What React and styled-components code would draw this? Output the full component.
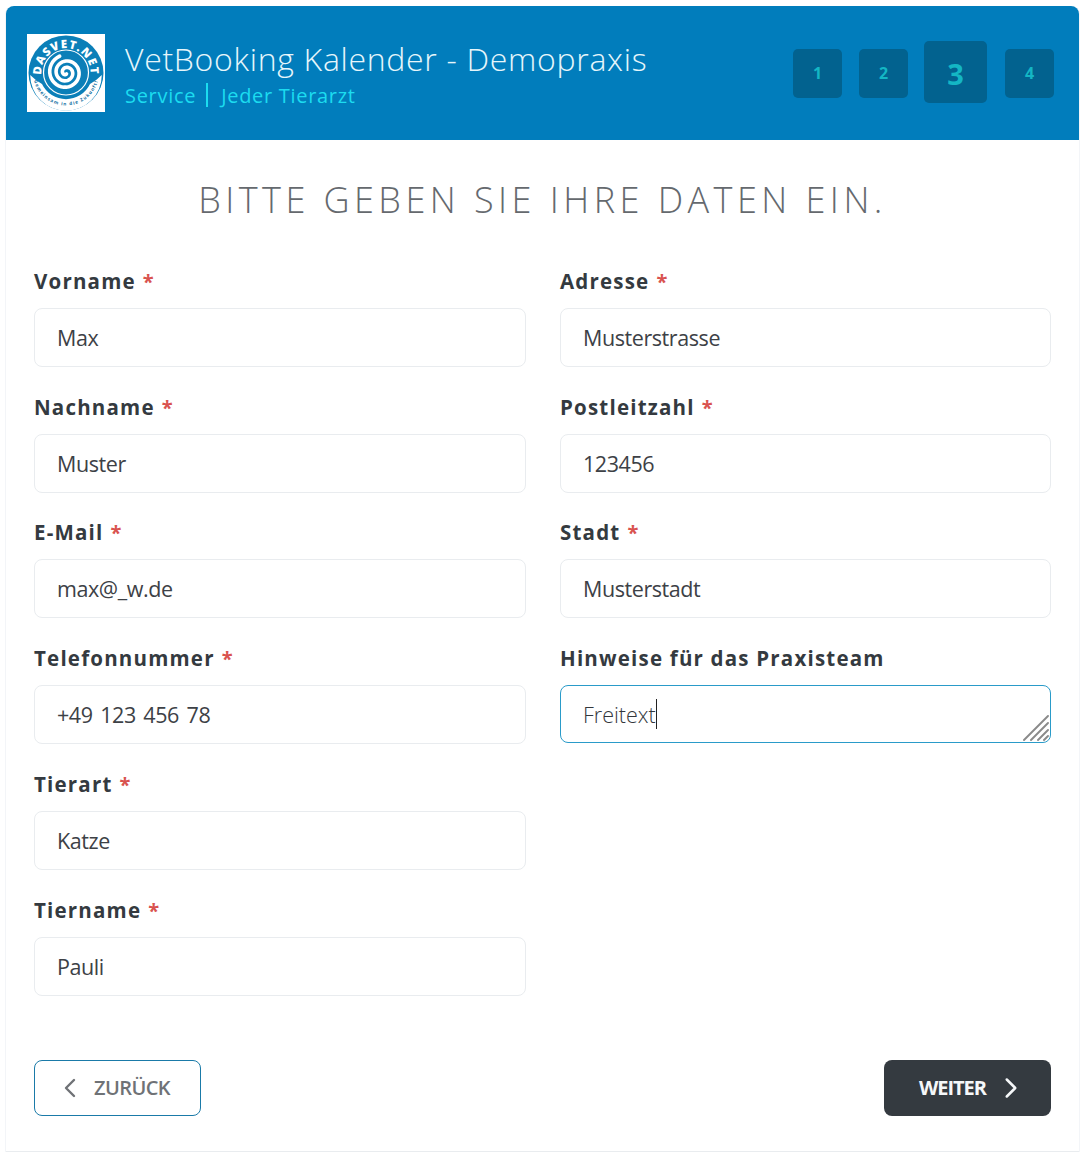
import React from "react";
import styled, { createGlobalStyle } from "styled-components";
import { ChevronLeft, ChevronRight } from "lucide-react";

const Global = createGlobalStyle`
  html, body { margin: 0; padding: 0; background: #fff; }
  * { box-sizing: border-box; }
  body { font-family: "Open Sans", "Liberation Sans", sans-serif; color: #343a40; }
`;

const Page = styled.div`
  width: 1083px;
  height: 1176px;
  padding: 6px 4px 0 6px;
`;
const Card = styled.main`
  width: 1073px;
  height: 1146px;
  border-bottom: 1px solid #e9ecef;
  box-shadow: -1px 0 0 #f3f5f8, 1px 0 0 #f3f5f8;
  border-radius: 8px 8px 0 0;
`;
const Header = styled.header`
  height: 134px;
  background: #017dbc;
  border-radius: 8px 8px 0 0;
  display: flex;
  align-items: flex-start;
  padding: 28px 25px 0 21px;
`;
const LogoBox = styled.div`
  width: 78px;
  height: 78px;
  background: #fff;
  flex: none;
  display: flex;
`;
const Titles = styled.div`
  margin-left: 20px;
  flex: 1;
`;
const Title = styled.h1`
  margin: 1px 0 0;
  font-size: 32px;
  line-height: 48px;
  font-weight: 300;
  letter-spacing: 0.7px;
  color: #e6f6fb;
  white-space: nowrap;
`;
const Subtitle = styled.div`
  margin-top: 0;
  font-size: 20px;
  line-height: 26px;
  font-weight: 400;
  letter-spacing: 0.7px;
  color: #1cdcf0;
  white-space: nowrap;
`;
const Divider = styled.span`
  display: inline-block;
  width: 2px;
  height: 24px;
  background: #1cdcf0;
  margin: 0 13px 0 10px;
  vertical-align: -4px;
`;
const Steps = styled.nav`
  display: flex;
  align-items: center;
  height: 62px;
  margin-top: 7px;
`;
const Step = styled.div`
  width: ${p => (p.$active ? 63 : 49)}px;
  height: ${p => (p.$active ? 62 : 49)}px;
  margin-left: ${p => p.$gap}px;
  margin-top: ${p => (p.$active ? 0 : 2)}px;
  padding-top: ${p => (p.$active ? 3 : 0)}px;
  border-radius: 5px;
  background: #02628f;
  color: #14b6c4;
  font-size: ${p => (p.$active ? 29 : 16)}px;
  font-weight: 700;
  display: flex;
  align-items: center;
  justify-content: center;
`;
const Body = styled.div`
  padding: 0 28px;
`;
const Heading = styled.h2`
  margin: 0;
  padding-top: 35px;
  height: 124.9px;
  text-align: center;
  font-size: 36px;
  line-height: 50px;
  font-weight: 300;
  letter-spacing: 4.46px;
  color: #65696e;
  white-space: nowrap;
`;
const Columns = styled.div`
  display: grid;
  grid-template-columns: 492px 491px;
  column-gap: 34px;
  height: 795.1px;
`;
const Column = styled.div`
  display: flex;
  flex-direction: column;
`;
const Field = styled.div`
  height: 125.75px;
  flex: none;
`;
const Label = styled.label`
  display: block;
  height: 43px;
  padding-top: 1px;
  font-size: 20.5px;
  line-height: 30px;
  font-weight: 700;
  letter-spacing: 1.2px;
  color: #343a40;
`;
const Star = styled.span`
  color: #d9534f;
  margin-left: 7px;
  font-size: 20px;
`;
const Input = styled.input`
  display: block;
  width: 100%;
  height: 59px;
  padding: 0 22px;
  border: 1px solid #e9ecef;
  border-radius: 8px;
  outline: none;
  font-family: inherit;
  font-size: 21.5px;
  font-weight: 400;
  letter-spacing: -0.42px;
  word-spacing: 2.4px;
  color: #3d4146;
  background: #fff;
`;
const AreaWrap = styled.div`
  position: relative;
  height: 58px;
`;
const Area = styled.textarea`
  display: block;
  width: 100%;
  height: 58px;
  padding: 12px 22px;
  border: 1px solid #2a9bc9;
  border-radius: 8px;
  outline: none;
  resize: none;
  overflow: hidden;
  font-family: inherit;
  font-size: 21.5px;
  line-height: 34px;
  font-weight: 300;
  color: #33373c;
`;
const Caret = styled.span`
  position: absolute;
  left: 96px;
  top: 14px;
  width: 1px;
  height: 30px;
  background: #222;
`;
const Grip = styled.svg`
  position: absolute;
  right: 2px;
  bottom: 2px;
`;
const Actions = styled.div`
  display: flex;
  justify-content: space-between;
  width: 1017px;
`;
const BackButton = styled.button`
  width: 167px;
  height: 56px;
  border: 1px solid #1a7aa8;
  border-radius: 8px;
  background: #fff;
  color: #6f7276;
  font-family: inherit;
  font-size: 20px;
  font-weight: 600;
  letter-spacing: -0.6px;
  display: flex;
  align-items: center;
  justify-content: center;
  gap: 8px;
  padding: 0 11px 0 0;
`;
const NextButton = styled(BackButton)`
  border: none;
  background: #343a40;
  color: #f5f7f9;
  font-weight: 700;
  letter-spacing: -1.05px;
  gap: 8px;
  padding: 0 0 0 12px;
`;

const left = [
  ["Vorname", "Max", 1],
  ["Nachname", "Muster", 1],
  ["E-Mail", "max@_w.de", 1],
  ["Telefonnummer", "+49 123 456 78", 1],
  ["Tierart", "Katze", 1],
  ["Tiername", "Pauli", 1],
];
const right = [
  ["Adresse", "Musterstrasse", 1],
  ["Postleitzahl", "123456", 1],
  ["Stadt", "Musterstadt", 1],
];

function Logo() {
  const spiral = [];
  for (let i = 0; i <= 90; i++) {
    const t = i / 90;
    const a = t * Math.PI * 5 + 1.2;
    const r = 1.5 + t * 16;
    spiral.push(`${(39 + Math.cos(a) * r).toFixed(2)} ${(38.5 + Math.sin(a) * r).toFixed(2)}`);
  }
  return (
    <svg width="78" height="78" viewBox="0 0 78 78">
      <defs>
        <path id="arcTop" d="M15.5 46 A24.6 24.6 0 1 1 62.5 46" />
        <path id="arcBot" d="M6 38.5 A33 33 0 0 0 72 38.5" />
      </defs>
      <circle cx="39" cy="39" r="37.5" fill="#0b7fb8" />
      <path d="M3.2 41 A35.8 35.8 0 0 0 74.8 41 Q70 46 63 50 A26.6 26.6 0 0 1 15 50 Q8 46 3.2 41 Z" fill="#fff" />
      <circle cx="39" cy="38.5" r="22.5" fill="#0b7fb8" stroke="#fff" strokeWidth="1.2" />
      <path d={"M" + spiral.join(" L")} fill="none" stroke="#fff" strokeWidth="3.6" strokeLinecap="round" />
      <text fontFamily="'Open Sans', sans-serif" fontSize="11.5" fontWeight="800" fill="#fff" letterSpacing="1.1">
        <textPath href="#arcTop" startOffset="50%" textAnchor="middle">DASVET.NET</textPath>
      </text>
      <text fontFamily="'Open Sans', sans-serif" fontSize="4.6" fontWeight="700" fill="#0b6b9e" letterSpacing="1">
        <textPath href="#arcBot" startOffset="50%" textAnchor="middle">Gemeinsam in die Zukunft!</textPath>
      </text>
    </svg>
  );
}

const FormField = ({ label, value, required }) => (
  <Field>
    <Label>{label}{required ? <Star>*</Star> : null}</Label>
    <Input defaultValue={value} readOnly />
  </Field>
);

export default function App() {
  return (
    <Page>
      <Global />
      <Card>
        <Header>
          <LogoBox><Logo /></LogoBox>
          <Titles>
            <Title>VetBooking Kalender - Demopraxis</Title>
            <Subtitle>Service<Divider />Jeder Tierarzt</Subtitle>
          </Titles>
          <Steps>
            <Step $gap={0}>1</Step>
            <Step $gap={17}>2</Step>
            <Step $gap={16} $active>3</Step>
            <Step $gap={18}>4</Step>
          </Steps>
        </Header>
        <Body>
          <Heading>BITTE GEBEN SIE IHRE DATEN EIN.</Heading>
          <Columns>
            <Column>
              {left.map(([l, v, r]) => <FormField key={l} label={l} value={v} required={r} />)}
            </Column>
            <Column>
              {right.map(([l, v, r]) => <FormField key={l} label={l} value={v} required={r} />)}
              <Field>
                <Label>Hinweise für das Praxisteam</Label>
                <AreaWrap>
                  <Area defaultValue="Freitext" readOnly />
                  <Caret />
                  <Grip width="26" height="26" viewBox="0 0 26 26">
                    <g stroke="#8a8a8a" strokeWidth="1.9" strokeLinecap="round">
                      <path d="M1 25 L25 1" />
                      <path d="M8 25 L25 8" />
                      <path d="M15 25 L25 15" />
                      <path d="M21 25 L25 21" />
                    </g>
                  </Grip>
                </AreaWrap>
              </Field>
            </Column>
          </Columns>
          <Actions>
            <BackButton><ChevronLeft size={32} strokeWidth={1.8} />ZURÜCK</BackButton>
            <NextButton>WEITER<ChevronRight size={34} strokeWidth={1.8} /></NextButton>
          </Actions>
        </Body>
      </Card>
    </Page>
  );
}
